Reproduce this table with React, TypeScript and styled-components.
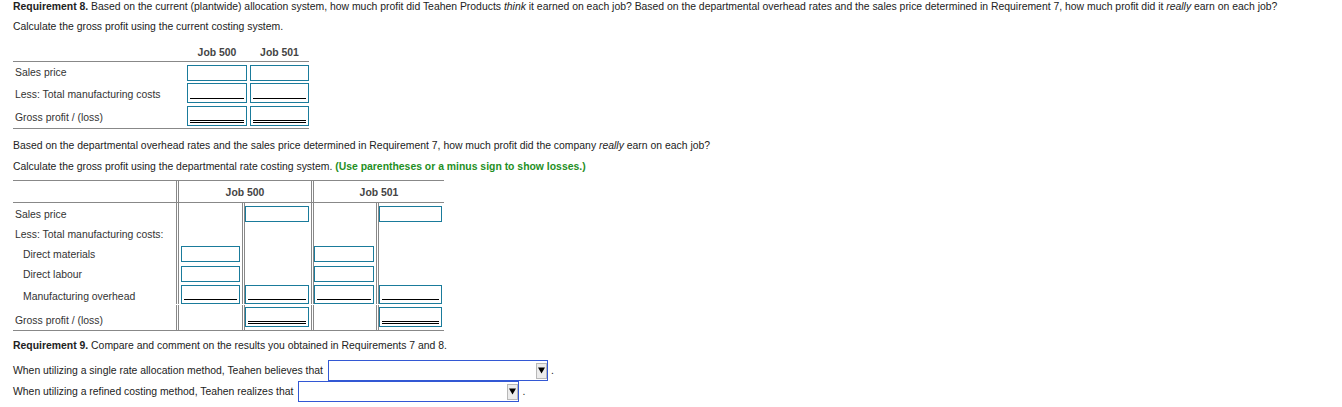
import React from "react";
import styled, { createGlobalStyle, css } from "styled-components";

const GlobalStyle = createGlobalStyle`
  html, body { margin: 0; padding: 0; background: #fff; }
  body {
    font-family: "Liberation Sans", Arial, Helvetica, sans-serif;
    font-size: 10.42px;
    color: #222;
  }
`;

const LINE = "#888";
const TEAL = "#1a7b9b";

const Page = styled.div`
  padding: 1px 13px 0;
  width: 1316px;
`;

const Para = styled.p<{ $mt?: number }>`
  margin: ${(p) => p.$mt ?? 0}px 0 0;
  line-height: 12px;
  white-space: nowrap;
`;

const Hint = styled.span`
  color: #1f8f1f;
  font-weight: bold;
`;

type Rule = "none" | "single" | "double";

const AnswerInput = styled.input<{ $h: number; $rule?: Rule }>`
  display: block;
  box-sizing: border-box;
  width: 100%;
  height: ${(p) => p.$h}px;
  margin: 0;
  padding: 0 3px;
  border: 1px solid ${TEAL};
  border-radius: 0;
  outline: none;
  font: inherit;
  background-color: #fff;
  background-repeat: no-repeat;
  ${(p) =>
    p.$rule === "single" &&
    css`
      background-image: linear-gradient(#000, #000);
      background-size: calc(100% - 4px) 1px;
      background-position: 2px calc(100% - 3px);
    `}
  ${(p) =>
    p.$rule === "double" &&
    css`
      background-image: linear-gradient(#000, #000), linear-gradient(#000, #000);
      background-size: calc(100% - 4px) 1px, calc(100% - 4px) 1px;
      background-position: 2px calc(100% - 4px), 2px calc(100% - 2px);
    `}
`;

/* ---------- Table 1 ---------- */

const SimpleTable = styled.div`
  width: 296px;
  margin-top: 11px;
  border-bottom: 1px solid ${LINE};
`;

const SimpleGrid = styled.div`
  display: grid;
  grid-template-columns: 171px 60px 59px;
  column-gap: 3px;
`;

const SimpleHead = styled(SimpleGrid)`
  height: 17px;
  align-items: center;
  border-bottom: 1px solid ${LINE};
`;

const HeadText = styled.div`
  text-align: center;
  font-weight: bold;
  color: #444;
  line-height: 12px;
`;

const SimpleBody = styled.div`
  padding: 3px 0 2px;
`;

const SimpleRow = styled(SimpleGrid)<{ $h: number; $mt?: number }>`
  height: ${(p) => p.$h}px;
  margin-top: ${(p) => p.$mt ?? 0}px;
`;

const RowLabel = styled.div<{ $pb?: number; $indent?: number }>`
  align-self: end;
  line-height: 12px;
  padding: 0 0 ${(p) => p.$pb ?? 2}px ${(p) => p.$indent ?? 2}px;
  color: #333;
  white-space: nowrap;
`;

/* ---------- Table 2 ---------- */

const DeptTable = styled.div`
  width: 431px;
  margin-top: 7px;
  border-top: 1px solid ${LINE};
  border-bottom: 1px solid ${LINE};
`;

const DeptHead = styled.div`
  display: grid;
  grid-template-columns: 164px 134px 131px;
  column-gap: 1px;
  border-bottom: 1px solid ${LINE};
`;

const Bordered = css<{ $l?: boolean; $r?: boolean }>`
  box-sizing: border-box;
  border-left: ${(p) => (p.$l ? `1px solid ${LINE}` : "0")};
  border-right: ${(p) => (p.$r ? `1px solid ${LINE}` : "0")};
`;

const DeptHeadCell = styled.div<{ $l?: boolean; $r?: boolean }>`
  ${Bordered};
  height: 21px;
  padding-top: 6px;
  line-height: 12px;
  text-align: center;
  font-weight: bold;
  color: #444;
`;

const DeptRow = styled.div<{ $h: number; $mt?: number }>`
  display: grid;
  grid-template-columns: 164px 65px 68px 64px 66px;
  column-gap: 1px;
  height: ${(p) => p.$h}px;
  margin-top: ${(p) => p.$mt ?? 0}px;
`;

const DeptLabel = styled.div<{ $pb?: number; $indent?: number }>`
  box-sizing: border-box;
  border-right: 1px solid ${LINE};
  display: flex;
  align-items: flex-end;
  line-height: 12px;
  padding: 0 0 ${(p) => p.$pb ?? 3}px ${(p) => p.$indent ?? 2}px;
  color: #333;
  white-space: nowrap;
`;

const ValueCell = styled.div<{ $l?: boolean; $r?: boolean; $pt: number; $pl: number }>`
  ${Bordered};
  padding: ${(p) => p.$pt}px 2px 0 ${(p) => p.$pl}px;
`;

/* ---------- Requirement 9 ---------- */

const ChoiceRow = styled.div<{ $mt?: number }>`
  display: flex;
  align-items: center;
  height: 21px;
  margin-top: ${(p) => p.$mt ?? 0}px;
  white-space: nowrap;
  line-height: 12px;
`;

const Select = styled.div<{ $w: number }>`
  box-sizing: border-box;
  width: ${(p) => p.$w}px;
  height: 21px;
  margin-left: 5px;
  border: 1px solid #3358d4;
  background: #fff;
  display: flex;
  justify-content: flex-end;
  align-items: center;
`;

const ArrowBox = styled.span`
  box-sizing: border-box;
  width: 11px;
  height: 16px;
  border: 1px solid #b8b8b8;
  background: #ececec;
  display: flex;
  align-items: center;
  justify-content: center;
`;

const Period = styled.span`
  margin-left: 3px;
`;

const Dropdown = ({ w }: { w: number }) => (
  <Select $w={w}>
    <ArrowBox>
      <svg width="7" height="7" viewBox="0 0 7 7">
        <polygon points="0,0.5 7,0.5 3.5,6.5" fill="#000" />
      </svg>
    </ArrowBox>
  </Select>
);

type Cell = { h: number; rule?: Rule } | null;

const deptRows: {
  label: string;
  indent?: number;
  pb?: number;
  h: number;
  pt: number;
  mt?: number;
  cells: Cell[];
}[] = [
  { label: "Sales price", h: 21, pt: 3, cells: [null, { h: 16 }, null, { h: 16 }] },
  { label: "Less: Total manufacturing costs:", h: 20, pt: 2, cells: [null, null, null, null] },
  { label: "Direct materials", indent: 10, h: 20, pt: 2, cells: [{ h: 16 }, null, { h: 16 }, null] },
  { label: "Direct labour", indent: 10, h: 20, pt: 2, cells: [{ h: 16 }, null, { h: 16 }, null] },
  {
    label: "Manufacturing overhead",
    indent: 10,
    pb: 1,
    h: 20,
    pt: 1,
    cells: [
      { h: 19, rule: "single" },
      { h: 19, rule: "single" },
      { h: 19, rule: "single" },
      { h: 19, rule: "single" },
    ],
  },
  {
    label: "Gross profit / (loss)",
    h: 25,
    pt: 2,
    mt: 1,
    cells: [null, { h: 20, rule: "double" }, null, { h: 20, rule: "double" }],
  },
];

const colBorders = [
  { l: true, r: true, pl: 2 },
  { l: true, r: true, pl: 0 },
  { l: true, r: true, pl: 0 },
  { l: true, r: false, pl: 0 },
];

export default function App() {
  return (
    <Page>
      <GlobalStyle />
      <Para>
        <b>Requirement 8.</b> Based on the current (plantwide) allocation system, how much profit did Teahen
        Products <i>think</i> it earned on each job? Based on the departmental overhead rates and the sales price
        determined in Requirement 7, how much profit did it <i>really</i> earn on each job?
      </Para>
      <Para $mt={8}>Calculate the gross profit using the current costing system.</Para>

      <SimpleTable>
        <SimpleHead>
          <div />
          <HeadText>Job 500</HeadText>
          <HeadText>Job 501</HeadText>
        </SimpleHead>
        <SimpleBody>
          <SimpleRow $h={16}>
            <RowLabel>Sales price</RowLabel>
            <AnswerInput $h={16} aria-label="Job 500 sales price" />
            <AnswerInput $h={16} aria-label="Job 501 sales price" />
          </SimpleRow>
          <SimpleRow $h={20} $mt={2}>
            <RowLabel>Less: Total manufacturing costs</RowLabel>
            <AnswerInput $h={20} $rule="single" aria-label="Job 500 costs" />
            <AnswerInput $h={20} $rule="single" aria-label="Job 501 costs" />
          </SimpleRow>
          <SimpleRow $h={20} $mt={3}>
            <RowLabel>Gross profit / (loss)</RowLabel>
            <AnswerInput $h={20} $rule="double" aria-label="Job 500 gross profit" />
            <AnswerInput $h={20} $rule="double" aria-label="Job 501 gross profit" />
          </SimpleRow>
        </SimpleBody>
      </SimpleTable>

      <Para $mt={11}>
        Based on the departmental overhead rates and the sales price determined in Requirement 7, how much profit
        did the company <i>really</i> earn on each job?
      </Para>
      <Para $mt={9}>
        Calculate the gross profit using the departmental rate costing system.{" "}
        <Hint>(Use parentheses or a minus sign to show losses.)</Hint>
      </Para>

      <DeptTable>
        <DeptHead>
          <DeptHeadCell $r />
          <DeptHeadCell $l $r>
            Job 500
          </DeptHeadCell>
          <DeptHeadCell $l>Job 501</DeptHeadCell>
        </DeptHead>
        {deptRows.map((row) => (
          <DeptRow key={row.label} $h={row.h} $mt={row.mt}>
            <DeptLabel $indent={row.indent} $pb={row.pb}>
              {row.label}
            </DeptLabel>
            {row.cells.map((c, i) => (
              <ValueCell key={i} $l={colBorders[i].l} $r={colBorders[i].r} $pt={row.pt} $pl={colBorders[i].pl}>
                {c && <AnswerInput $h={c.h} $rule={c.rule} aria-label={`${row.label} ${i}`} />}
              </ValueCell>
            ))}
          </DeptRow>
        ))}
      </DeptTable>

      <Para $mt={9}>
        <b>Requirement 9.</b> Compare and comment on the results you obtained in Requirements 7 and 8.
      </Para>
      <ChoiceRow $mt={8}>
        When utilizing a single rate allocation method, Teahen believes that
        <Dropdown w={220} />
        <Period>.</Period>
      </ChoiceRow>
      <ChoiceRow>
        When utilizing a refined costing method, Teahen realizes that
        <Dropdown w={221} />
        <Period>.</Period>
      </ChoiceRow>
    </Page>
  );
}
